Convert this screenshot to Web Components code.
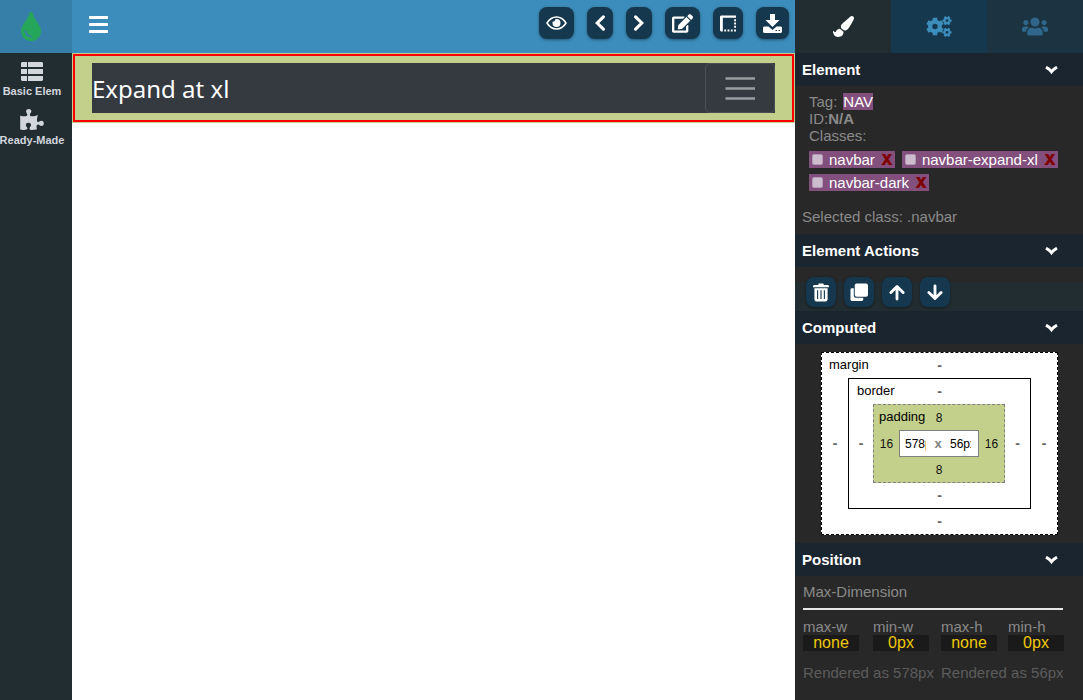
<!DOCTYPE html>
<html lang="en">
<head>
<meta charset="utf-8">
<meta name="viewport" content="width=device-width, initial-scale=1">
<title>Page Builder</title>
<style>
  html, body { margin: 0; height: 100%; }
  body { font: 15px/17px "Liberation Sans", Arial, sans-serif; background: #fff; }
</style>
</head>
<body>
<builder-app></builder-app>

<script>
// Outline of a toothed wheel with a round hole, for the settings icon.
function gear(cx, cy, outer, inner, hole, teeth, turn) {
  let d = '';
  const step = Math.PI * 2 / teeth;
  for (let i = 0; i < teeth; i++) {
    const a = i * step + turn;
    [[-0.32, inner], [-0.24, outer], [0.24, outer], [0.32, inner]].forEach(([k, r]) => {
      d += (d ? 'L' : 'M') + (cx + Math.cos(a + k * step) * r).toFixed(2) + ' ' + (cy + Math.sin(a + k * step) * r).toFixed(2);
    });
  }
  return d + `ZM${cx - hole} ${cy}a${hole} ${hole} 0 1 0 ${hole * 2} 0a${hole} ${hole} 0 1 0 ${-hole * 2} 0Z`;
}

// name: [viewBox, markup]
const ICONS = {
  drop: ['0 0 352 512', '<path d="M205.22 22.09c-7.94-28.78-49.44-30.12-58.44 0C100.01 179.85 0 222.72 0 333.91 0 432.35 78.72 512 176 512s176-79.65 176-178.09c0-111.75-99.79-153.34-146.78-311.82zM176 448c-61.75 0-112-50.25-112-112 0-8.84 7.16-16 16-16s16 7.16 16 16c0 44.11 35.89 80 80 80 8.84 0 16 7.16 16 16s-7.16 16-16 16z"/>'],
  list: ['0 0 22 19', '<path d="M1 0h5v5H0V1zM7 0h14l1 1v4H7zM0 7h6v5H0zM7 7h15v5H7zM0 14h6v5H1l-1-1zM7 14h15v4l-1 1H7z"/>'],
  puzzle: ['0 0 576 512', '<path d="M519.442 288.651c-41.519 0-59.5 31.593-82.058 31.593C377.409 320.244 432 144 432 144s-196.288 80-196.288-3.297c0-35.827 36.288-46.25 36.288-85.985C272 19.216 243.885 0 210.539 0c-34.654 0-66.366 18.891-66.366 56.346 0 41.364 31.711 59.277 31.711 81.75C175.885 207.719 0 166.758 0 166.758v333.237s178.635 41.047 178.635-28.662c0-22.473-40-40.107-40-81.471 0-37.456 29.25-56.346 63.577-56.346 33.673 0 61.788 19.216 61.788 54.717 0 39.735-36.288 50.158-36.288 85.985 0 60.803 129.675 25.73 181.23 25.73 0 0-34.725-120.101 25.827-120.101 35.962 0 46.423 36.152 86.308 36.152C556.712 416 576 387.99 576 354.443c0-34.199-18.962-65.792-56.558-65.792z"/>'],
  bars: ['0 0 19 17', '<rect width="19" height="3" rx=".7"/><rect y="7" width="19" height="3" rx=".7"/><rect y="14" width="19" height="3" rx=".7"/>'],
  eye: ['0 0 21 14', '<path d="M1 7C3.500 3 6.800 1 10.500 1S17.500 3 20 7c-2.500 4-5.800 6-9.500 6S3.500 11 1 7z" fill="none" stroke="currentColor" stroke-width="1.600" stroke-linejoin="round"/><path d="M10.500 3a4 4 0 1 1-4 4c0-.6.100-1 .3-1.500a2 2 0 0 0 2.400-2.300q.6-.2 1.300-.2z"/>'],
  left: ['0 0 10 16', '<path d="M8.400 1.800L2.200 8l6.200 6.200" fill="none" stroke="currentColor" stroke-width="3.100" stroke-linecap="round"/>'],
  right: ['0 0 10 16', '<path d="M1.600 1.800L7.800 8l-6.200 6.200" fill="none" stroke="currentColor" stroke-width="3.100" stroke-linecap="round"/>'],
  edit: ['0 0 576 512', '<path d="M402.6 83.2l90.2 90.2c3.8 3.8 3.8 10 0 13.8L274.4 405.6l-92.8 10.3c-12.4 1.4-22.9-9.1-21.5-21.5l10.3-92.8L388.8 83.2c3.8-3.8 10-3.8 13.8 0zm162-22.9l-48.8-48.8c-15.2-15.2-39.9-15.2-55.2 0l-35.4 35.4c-3.8 3.8-3.8 10 0 13.8l90.2 90.2c3.8 3.8 10 3.8 13.8 0l35.4-35.4c15.2-15.3 15.2-40 0-55.2zM384 346.2V448H64V128h229.8c3.2 0 6.2-1.3 8.5-3.5l40-40c7.6-7.6 2.2-20.5-8.5-20.5H48C21.5 64 0 85.5 0 112v352c0 26.5 21.5 48 48 48h352c26.5 0 48-21.5 48-48V306.2c0-10.7-12.9-16-20.5-8.5l-40 40c-2.2 2.3-3.5 5.3-3.5 8.5z"/>'],
  border: ['0 0 17 17', '<path d="M0 1l1-1h16v2.500H3V17H1l-1-1zM15 4h2v2h-2zM15 7.500h2v2h-2zM15 11h2v2h-2zM15 15h2v2h-2zM11.500 15h2v2h-2zM8 15h2v2H8zM4.500 15h2v2h-2z"/>'],
  download: ['0 0 19 19', '<path d="M7 0h5v6H16.500L9.500 13 2.500 6H7zM1 12.500h4.500l4 3.500 4-3.500H18l1 1V18l-1 1H1l-1-1v-4.500zM12.500 16v1h1.500v-1zM15.500 16v1H17v-1z" fill-rule="evenodd"/>'],
  brush: ['0 0 512 512', '<path d="M167.02 309.34c-40.12 2.58-76.53 17.86-97.19 72.3-2.35 6.21-8 9.98-14.59 9.98-11.11 0-45.46-27.67-55.25-34.35C0 439.62 37.93 512 128 512c75.86 0 128-43.77 128-120.19 0-3.11-.65-6.08-.97-9.13l-88.01-73.34zM457.89 0c-15.16 0-29.37 6.71-40.21 16.45C213.27 199.05 192 203.34 192 257.09c0 13.7 3.25 26.76 8.73 38.7l63.82 53.18c7.21 1.8 14.64 3.03 22.39 3.03 62.11 0 98.11-45.47 211.16-256.46 7.38-14.35 13.9-29.85 13.9-45.99C512 20.64 486 0 457.89 0z"/>'],
  cogs: ['0 0 26 21', `<path fill-rule="evenodd" d="${gear(9, 10.5, 9, 7, 2.7, 6, Math.PI / 6)}${gear(21, 4.6, 4.7, 3.6, 1.4, 6, 0)}${gear(21, 16.4, 4.7, 3.6, 1.4, 6, 0)}"/>`],
  users: ['0 0 640 512', '<path d="M96 224c35.3 0 64-28.7 64-64s-28.7-64-64-64-64 28.7-64 64 28.7 64 64 64zm448 0c35.3 0 64-28.7 64-64s-28.7-64-64-64-64 28.7-64 64 28.7 64 64 64zm32 32h-64c-17.6 0-33.5 7.1-45.1 18.6 40.3 22.1 68.9 62 75.1 109.4h66c17.7 0 32-14.3 32-32v-32c0-35.3-28.7-64-64-64zm-256 0c61.9 0 112-50.1 112-112S381.9 32 320 32 208 82.1 208 144s50.1 112 112 112zm76.8 32h-8.3c-20.8 10-43.9 16-68.5 16s-47.6-6-68.5-16h-8.3C179.6 288 128 339.6 128 403.2V432c0 26.5 21.5 48 48 48h288c26.5 0 48-21.5 48-48v-28.8c0-63.6-51.6-115.2-115.2-115.2zm-223.7-13.4C161.5 263.1 145.6 256 128 256H64c-35.3 0-64 28.7-64 64v32c0 17.7 14.3 32 32 32h65.9c6.3-47.4 34.9-87.3 75.2-109.4z"/>'],
  caret: ['0 0 13 8', '<path d="M1 1.200C3.500 2.500 5.300 3.800 6.500 5.600 7.700 3.800 9.500 2.500 12 1.200" fill="none" stroke="currentColor" stroke-width="3"/>'],
  trash: ['0 0 17 19', '<path fill-rule="evenodd" d="M1 1.500h4.500L6 0h5l.5 1.500H16l1 1V4H0V2.500zM1.500 5h14v12.500L14 19H3l-1.500-1.500zM4.300 7v9.500h1.200V7zM7.900 7v9.500h1.200V7zM11.500 7v9.500h1.200V7z"/>'],
  clone: ['0 0 19 19', '<rect x="5" width="14" height="14" rx="2"/><path d="M2 5h2v8q0 2 2 2h8v2q0 1.500-1.500 1.500H2Q.5 18.500.5 17V6.500Q.5 5 2 5z"/>'],
  up: ['0 0 17 17', '<path d="M8.500 15.500V2.500M2 8.500l6.500-6.500 6.500 6.500" fill="none" stroke="currentColor" stroke-width="3" stroke-linecap="round" stroke-linejoin="round"/>'],
  down: ['0 0 17 17', '<path d="M8.500 1.500v13M2 8.500l6.500 6.500 6.500-6.500" fill="none" stroke="currentColor" stroke-width="3" stroke-linecap="round" stroke-linejoin="round"/>'],
  toggler: ['0 0 30 30', '<path d="M.5 5.500h29.500M.5 15.500h29.500M.5 25.500h29.500" fill="none" stroke="currentColor" stroke-width="2.400"/>']
};

function define(name, render) {
  customElements.define(name, class extends HTMLElement {
    connectedCallback() {
      if (this.shadowRoot) return;
      this.attachShadow({ mode: 'open' }).innerHTML = render(this);
    }
  });
}
const at = (el, key, fallback = '') => el.getAttribute(key) ?? fallback;

define('ui-icon', el => {
  const [box, art] = ICONS[at(el, 'name')];
  return `<style>
    :host { display: inline-flex; flex: none; width: ${at(el, 'w', 18)}px; height: ${at(el, 'h', 18)}px; }
    svg { width: 100%; height: 100%; fill: currentColor; }
  </style><svg viewBox="${box}" aria-hidden="true">${art}</svg>`;
});

define('tool-button', el => `<style>
    :host { display: block; }
    button { display: flex; align-items: center; justify-content: center; box-sizing: border-box;
      min-width: var(--tool-size, 0); height: var(--tool-size, 32px); margin: 0; padding: 0 var(--tool-pad, 8px);
      border: 0; border-radius: 8px; background: #16384e; color: #fff;
      box-shadow: 0 1px 3px rgba(0, 0, 0, .4); cursor: pointer; }
  </style><button type="button" aria-label="${at(el, 'label')}"><ui-icon name="${at(el, 'icon')}" w="${at(el, 'w', 18)}" h="${at(el, 'h', 18)}"></ui-icon></button>`);

define('side-item', el => `<style>
    :host { display: block; }
    a { display: flex; flex-direction: column; align-items: center; gap: 4px; width: 64px;
      color: #d2d6de; text-decoration: none; font-weight: bold; font-size: 11px; line-height: 12px; white-space: nowrap; }
  </style><a href="#"><ui-icon name="${at(el, 'icon')}" w="${at(el, 'w')}" h="${at(el, 'h')}"></ui-icon><span><slot></slot></span></a>`);

define('side-bar', () => `<style>
    :host { display: flex; flex-direction: column; background: #222d32; }
    .brand { display: flex; align-items: center; justify-content: center; height: 53px; padding-right: 11px;
      box-sizing: border-box; background: #367fa9; color: #26a65b; }
    nav { display: flex; flex-direction: column; gap: 12px; padding-top: 9px; }
  </style>
  <a class="brand" href="#" aria-label="Home"><ui-icon name="drop" w="20" h="29"></ui-icon></a>
  <nav>
    <side-item icon="list" w="22" h="19">Basic Elem</side-item>
    <side-item icon="puzzle" w="24" h="21">Ready-Made</side-item>
  </nav>`);

define('top-bar', () => `<style>
    :host { display: flex; align-items: flex-start; justify-content: space-between; box-sizing: border-box;
      height: 53px; padding: 7px 6px 0 17px; background: #3c8dbc; }
    .menu { display: flex; margin: 9px 0 0; padding: 0; border: 0; background: none; color: #fff; cursor: pointer; }
    .tools { display: flex; gap: 13px; }
  </style>
  <button class="menu" type="button" aria-label="Menu"><ui-icon name="bars" w="19" h="17"></ui-icon></button>
  <div class="tools">
    <tool-button icon="eye" w="21" h="14" label="Preview" style="--tool-pad: 7px"></tool-button>
    <tool-button icon="left" w="10" h="16" label="Undo"></tool-button>
    <tool-button icon="right" w="10" h="16" label="Redo"></tool-button>
    <tool-button icon="edit" w="21" h="19" label="Edit" style="--tool-pad: 7px"></tool-button>
    <tool-button icon="border" w="16" h="17" label="Outlines" style="--tool-pad: 7px"></tool-button>
    <tool-button icon="download" w="19" h="19" label="Download" style="--tool-pad: 7px"></tool-button>
  </div>`);

define('page-canvas', () => `<style>
    :host { display: block; background: #fff; }
    nav { padding: 10px 20px; background: #c3d08b; outline: 2px solid #f00; outline-offset: -3px; }
    .bar { display: flex; align-items: center; justify-content: space-between; height: 50px; background: #343a40; }
    a { padding-top: 2px; color: #fff; text-decoration: none; font: 24px/38px "Noto Sans", "Open Sans", sans-serif; white-space: nowrap; }
    button { display: flex; align-items: center; justify-content: center; box-sizing: border-box; width: 70px; height: 50px;
      padding: 0; border: 1px solid rgba(255, 255, 255, .1); border-radius: 5px; background: none; color: rgba(255, 255, 255, .5); }
  </style>
  <nav><div class="bar">
    <a href="#">Expand at xl</a>
    <button type="button" aria-label="Toggle navigation"><ui-icon name="toggler" w="30" h="30"></ui-icon></button>
  </div></nav>`);

define('panel-tabs', () => `<style>
    :host { display: grid; grid-template-columns: 1fr 1fr 1fr; height: 53px; }
    button { display: flex; align-items: center; justify-content: center; margin: 0; padding: 0; border: 0; cursor: pointer; }
    .style { background: #222d32; color: #fff; }
    .settings { background: #16384e; color: #3c8dbc; }
    .people { background: #1c3441; color: #2f668a; }
  </style>
  <button class="style" type="button" aria-label="Style"><ui-icon name="brush" w="21" h="21"></ui-icon></button>
  <button class="settings" type="button" aria-label="Settings"><ui-icon name="cogs" w="26" h="21"></ui-icon></button>
  <button class="people" type="button" aria-label="Users"><ui-icon name="users" w="26" h="21"></ui-icon></button>`);

define('panel-section', el => `<style>
    :host { display: block; color: #8a8a8a; }
    h2 { margin: 0; font-size: 15px; line-height: 17px; }
    h2 button { display: flex; align-items: center; justify-content: space-between; box-sizing: border-box; width: 100%; height: 33px;
      padding: 0 25px 0 7px; border: 0; background: #1a2530; color: #fff; font: inherit; cursor: pointer; }
  </style><h2><button type="button" aria-expanded="true">${at(el, 'heading')}<ui-icon name="caret" w="13" h="8"></ui-icon></button></h2><slot></slot>`);

define('class-chip', el => `<style>
    :host { display: flex; align-items: center; height: 17px; padding: 0 2px 0 3px; background: #834f7d; color: #fff; }
    label { display: flex; align-items: center; gap: 6px; }
    input { appearance: none; box-sizing: border-box; width: 11px; height: 11px; margin: 0; border: 1px solid #b39ab4;
      border-radius: 2px; background: #cdbccd; }
    button { width: 12px; margin: 0 0 0 6px; padding: 0; border: 0; background: none; color: maroon; font: 900 15px/17px Inter, "DejaVu Sans", sans-serif; cursor: pointer; }
  </style><label><input type="checkbox"><slot></slot></label><button type="button">X</button>`);

define('element-info', () => `<style>
    :host { display: block; padding: 7px 14px 9px 7px; }
    dl { margin: 0 0 7px 7px; }
    dl div { display: flex; }
    dt, dd { margin: 0; }
    .tag dd { margin-left: 6px; background: #834f7d; color: #fff; }
    .id dd { font-weight: bold; }
    .chips { display: flex; flex-wrap: wrap; gap: 6px 7px; margin: 0 0 17px 7px; }
    p { margin: 0; }
  </style>
  <dl>
    <div class="tag"><dt>Tag:</dt><dd>NAV</dd></div>
    <div class="id"><dt>ID:</dt><dd>N/A</dd></div>
    <div><dt>Classes:</dt></div>
  </dl>
  <div class="chips"><class-chip>navbar</class-chip><class-chip>navbar-expand-xl</class-chip><class-chip>navbar-dark</class-chip></div>
  <p>Selected class: .navbar</p>`);

define('element-actions', () => `<style>
    :host { display: flex; gap: 8px; padding: 10px 11px 4px; --tool-size: 30px; --tool-pad: 0px;
      background: linear-gradient(#282828 15px, #222d32 15px); }
  </style>
  <tool-button icon="trash" w="16" h="19" label="Delete"></tool-button>
  <tool-button icon="clone" w="18" h="19" label="Duplicate"></tool-button>
  <tool-button icon="up" w="16" h="17" label="Move up"></tool-button>
  <tool-button icon="down" w="16" h="17" label="Move down"></tool-button>`);

// One ring of the box model: a name, four edge values and whatever is nested inside.
define('box-ring', el => `<style>
    :host { display: grid; grid-template: 25px auto 25px / 25px auto 25px; align-items: center; justify-items: center;
      position: relative; color: #111; font-size: 12px; line-height: 14px; border: 1px solid #000; background: #fff; }
    :host([kind="margin"]) { border-style: dashed; grid-template-columns: 26px auto 26px; }
    :host([kind="border"]) { grid-template-columns: 24px auto 25px; }
    :host([kind="padding"]) { border: 1px dashed #808080; background: #c3d08b; }
    .name { position: absolute; top: 4px; left: var(--name-left, 7px); font-size: 13px; line-height: 16px; color: #000; }
    .top, .bottom { grid-column: 1 / -1; }
    b { color: #666; font-size: 14px; }
  </style>
  <span class="name">${at(el, 'kind')}</span>
  ${['top', 'left', 'inner', 'right', 'bottom'].map(side => {
    if (side === 'inner') return '<slot></slot>';
    const value = at(el, side, '-');
    return `<span class="${side}">${value === '-' ? '<b>-</b>' : value}</span>`;
  }).join('')}`);

define('box-model', () => `<style>
    :host { display: flex; justify-content: center; padding: 8px 0 8px 1px; }
    .size { display: flex; align-items: center; justify-content: space-between; box-sizing: border-box; width: 80px; height: 27px;
      padding: 0 7px 0 5px; border: 1px solid #808080; background: #fff; }
    input { width: 21px; height: 14px; margin: 0; padding: 0; border: 0; background: none; color: #000; font: 12px/14px "Liberation Sans", Arial, sans-serif; }
    b { color: #808080; font-size: 13px; }
  </style>
  <box-ring kind="margin"><box-ring kind="border" style="--name-left: 8px"><box-ring kind="padding" top="8" right="16" bottom="8" left="16" style="--name-left: 5px">
    <div class="size"><input aria-label="Width" value="578px"><b>x</b><input aria-label="Height" value="56px"></div>
  </box-ring></box-ring></box-ring>`);

define('position-info', () => `<style>
    :host { display: block; padding: 7px 20px 16px 8px; }
    h3 { margin: 0; padding-bottom: 8px; border-bottom: 2px solid #e6e6e6; font-weight: normal; font-size: 15px; line-height: 17px; }
    .fields { display: grid; grid-template-columns: 70px 68px 67px 56px; margin-top: 9px; }
    label { line-height: 16px; }
    input { display: block; box-sizing: border-box; width: 56px; height: 16px; margin: 0; padding: 0; border: 0;
      background: #1a1a1a; color: #f0c808; font: 16px/16px "Liberation Sans", Arial, sans-serif; text-align: center; }
    .note { grid-column: span 2; margin: 13px 0 0; color: #5c5c5c; white-space: nowrap; }
  </style>
  <h3>Max-Dimension</h3>
  <div class="fields">
    <label>max-w<input value="none"></label>
    <label>min-w<input value="0px"></label>
    <label>max-h<input value="none"></label>
    <label>min-h<input value="0px"></label>
    <p class="note">Rendered as 578px</p>
    <p class="note">Rendered as 56px</p>
  </div>`);

define('inspector-panel', () => `<style>
    :host { display: block; background: #282828; }
  </style>
  <panel-tabs></panel-tabs>
  <panel-section heading="Element"><element-info></element-info></panel-section>
  <panel-section heading="Element Actions"><element-actions></element-actions></panel-section>
  <panel-section heading="Computed"><box-model></box-model></panel-section>
  <panel-section heading="Position"><position-info></position-info></panel-section>`);

define('builder-app', () => `<style>
    :host { display: grid; grid-template-columns: 72px minmax(0, 1fr) 288px; min-height: 100vh; }
    main { min-width: 0; }
  </style>
  <side-bar></side-bar>
  <main><top-bar></top-bar><page-canvas></page-canvas></main>
  <inspector-panel></inspector-panel>`);
</script>
</body>
</html>
